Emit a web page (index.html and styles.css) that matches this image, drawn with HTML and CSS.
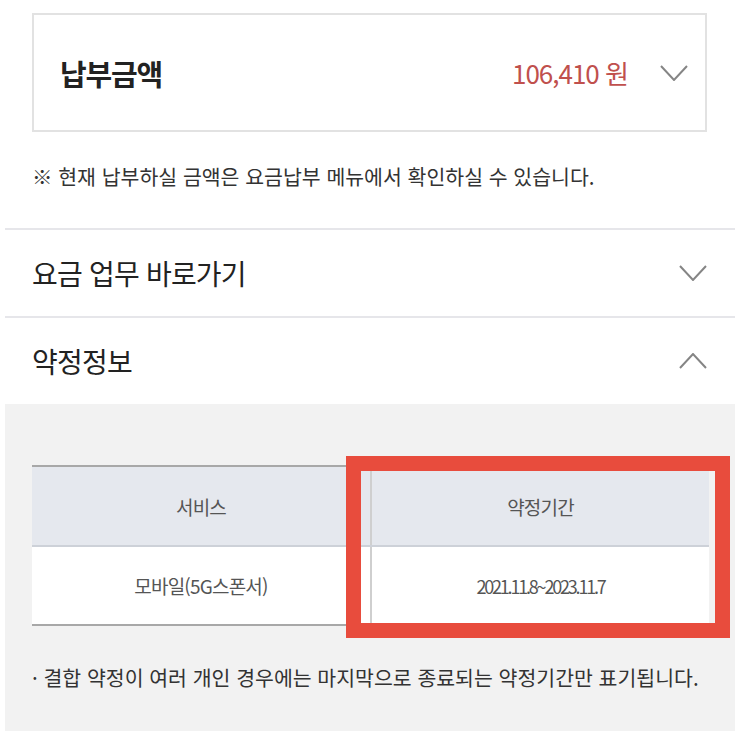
FILE: index.html
```html
<!DOCTYPE html>
<html lang="ko">
<head>
<meta name="viewport" content="width=device-width, initial-scale=1">
<title>약정정보</title>
  <link rel="stylesheet" href="styles.css">
</head>
<body>

<div class="pay-box">
  <span class="pay-title">납부금액</span>
  <span class="pay-amount">106,410 원</span>
  <svg class="chev chev-box" viewBox="0 0 28 16"><polyline points="1,1 14,15 27,1"/></svg>
</div>

<p class="notice">※ 현재 납부하실 금액은 요금납부 메뉴에서 확인하실 수 있습니다.</p>

<div class="acc-row">
  <span class="acc-title">요금 업무 바로가기</span>
  <svg class="chev" viewBox="0 0 28 16"><polyline points="1,1 14,15 27,1"/></svg>
</div>

<div class="acc-row">
  <span class="acc-title">약정정보</span>
  <svg class="chev" viewBox="0 0 28 16"><polyline points="1,15 14,1 27,15"/></svg>
</div>

<div class="panel">
  <div class="table-wrap">
    <table class="contract">
      <tr>
        <th class="col-service">서비스</th>
        <th>약정기간</th>
      </tr>
      <tr>
        <td class="col-service">모바일(5G스폰서)</td>
        <td class="period">2021.11.8~2023.11.7</td>
      </tr>
    </table>
    <div class="highlight"></div>
  </div>
  <p class="panel-note">· 결합 약정이 여러 개인 경우에는 마지막으로 종료되는 약정기간만 표기됩니다.</p>
</div>

</body>
</html>
```

FILE: styles.css
```css
body {
  margin: 0;
  background: #fff;
  color: #222;
  font-family: 'Noto Sans CJK KR', 'Noto Sans', sans-serif;
}
.pay-box {
  margin: 13px 36px 0 32px;
  height: 115px;
  border: 2px solid #e2e2e2;
  display: flex;
  align-items: center;
  padding: 0 17px 0 26px;
}
.pay-title {
  font-size: 29px;
  font-weight: bold;
  letter-spacing: -1.2px;
  flex: 1;
}
.pay-amount {
  font-size: 26px;
  color: #c0504d;
  letter-spacing: -1px;
  margin-right: 32px;
}
.chev {
  width: 28px;
  height: 16px;
  fill: none;
  stroke: #858585;
  stroke-width: 2;
}
.notice {
  margin: 30px 0 0 32px;
  height: 66px;
  font-size: 20.5px;
  color: #333;
  line-height: 28px;
}
.acc-row {
  margin: 0 8px 0 5px;
  height: 86px;
  border-top: 2px solid #e6e6ea;
  display: flex;
  align-items: center;
  justify-content: space-between;
  padding: 0 28px 0 27px;
}
.acc-title {
  font-size: 28px;
  letter-spacing: -0.8px;
}
.panel {
  margin: 0 8px 0 5px;
  background: #f2f2f2;
  padding: 61px 0 40px 27px;
}
.table-wrap {
  position: relative;
  width: 677px;
}
.contract {
  width: 100%;
  border-collapse: collapse;
  border-top: 2px solid #a8a8a8;
  border-bottom: 2px solid #a8a8a8;
  font-size: 19px;
  letter-spacing: -0.8px;
  color: #555;
}
.contract th {
  background: #e5e8ee;
  font-weight: normal;
  height: 76px;
  border-bottom: 2px solid #cdd1d8;
}
.contract td {
  background: #fff;
  height: 75px;
  text-align: center;
}
.col-service {
  width: 336px;
  border-right: 2px solid #cfcfcf;
}
.contract .period {
  font-size: 18px;
  letter-spacing: -2.2px;
}
.highlight {
  position: absolute;
  left: 314px;
  top: -9px;
  width: 354px;
  height: 152px;
  border: 15px solid #e84c3d;
}
.panel-note {
  margin: 36px 0 0 0;
  font-size: 20.5px;
  color: #333;
}
```
